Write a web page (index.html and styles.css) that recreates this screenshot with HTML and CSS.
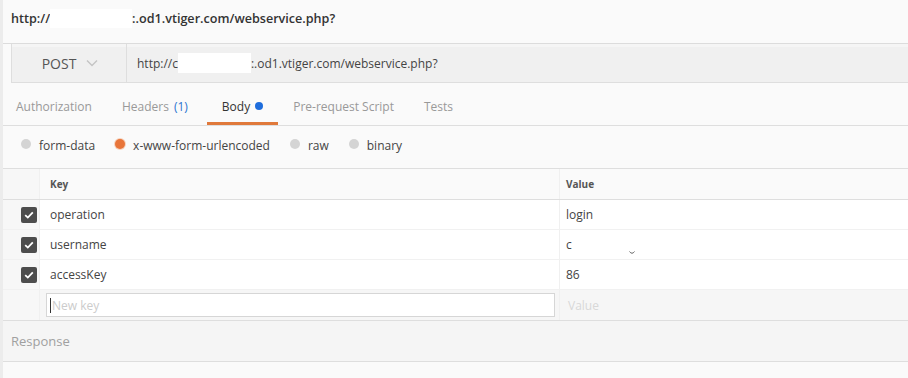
FILE: index.html
```html
<!DOCTYPE html>
<html lang="en">
<head>
  <meta charset="UTF-8" />
  <title>Request</title>
  <link rel="stylesheet" href="styles.css">
</head>
<body>
  <div class="title">http://<span class="redact title-redact"></span>:.od1.vtiger.com/webservice.php?</div>

  <div class="request-bar">
    <div class="method">POST
      <svg class="chevron" width="12" height="8" viewBox="0 0 12 8"><path d="M1 1.5 L6 6.5 L11 1.5" fill="none" stroke="#c4c4c4" stroke-width="1.4"/></svg>
    </div>
    <div class="url">http://c<span class="redact url-redact"></span>:.od1.vtiger.com/webservice.php?</div>
  </div>

  <div class="tabs">
    <div class="tab">Authorization</div>
    <div class="tab">Headers <span class="count">(1)</span></div>
    <div class="tab active">Body <span class="dot"></span></div>
    <div class="tab">Pre-request Script</div>
    <div class="tab">Tests</div>
  </div>

  <div class="body-types">
    <label class="radio"><span class="circle"></span>form-data</label>
    <label class="radio"><span class="circle on"></span>x-www-form-urlencoded</label>
    <label class="radio"><span class="circle"></span>raw</label>
    <label class="radio"><span class="circle"></span>binary</label>
  </div>

  <div class="params">
    <div class="row head">
      <div class="cell check"></div>
      <div class="cell key">Key</div>
      <div class="cell value">Value</div>
    </div>
    <div class="row">
      <div class="cell check"><span class="box"><svg width="10" height="8" viewBox="0 0 10 8"><path d="M1.2 4.2 L3.8 6.6 L8.8 1.4" fill="none" stroke="white" stroke-width="1.8"/></svg></span></div>
      <div class="cell key">operation</div>
      <div class="cell value">login</div>
    </div>
    <div class="row">
      <div class="cell check"><span class="box"><svg width="10" height="8" viewBox="0 0 10 8"><path d="M1.2 4.2 L3.8 6.6 L8.8 1.4" fill="none" stroke="white" stroke-width="1.8"/></svg></span></div>
      <div class="cell key">username</div>
      <div class="cell value">c<span class="mark"><svg width="6" height="4" viewBox="0 0 6 4"><path d="M0.5 0.5 Q3 4 5.5 0.5" fill="none" stroke="#666" stroke-width="1"/></svg></span></div>
    </div>
    <div class="row">
      <div class="cell check"><span class="box"><svg width="10" height="8" viewBox="0 0 10 8"><path d="M1.2 4.2 L3.8 6.6 L8.8 1.4" fill="none" stroke="white" stroke-width="1.8"/></svg></span></div>
      <div class="cell key">accessKey</div>
      <div class="cell value">86</div>
    </div>
    <div class="row new">
      <div class="cell check"></div>
      <div class="cell key"><div class="new-input"><span class="caret"></span>New key</div></div>
      <div class="cell value placeholder">Value</div>
    </div>
  </div>

  <div class="response">Response</div>
</body>
</html>
```
FILE: styles.css
```css
body {
  margin: 0;
  background: #fafafa;
  font-family: "Open Sans", "DejaVu Sans", sans-serif;
  color: #333;
  border-left: 3px solid #ececec;
  height: 378px;
  box-sizing: border-box;
  overflow: hidden;
}

.redact {
  display: inline-block;
  background: white;
  vertical-align: middle;
}

.title {
  height: 43px;
  line-height: 38px;
  padding-left: 8px;
  font-size: 12.6px;
  font-weight: 600;
  color: #333;
  border-bottom: 1px solid #dcdcdc;
}

.title-redact {
  width: 82px;
  height: 19px;
  margin-top: -3px;
}

.request-bar {
  display: flex;
  height: 38px;
  margin-left: 8px;
  background: #f0f0f0;
  border: 1px solid #dedede;
  border-right: none;
  border-top: none;
  box-shadow: inset 0 3px 0 #f5f5f5;
}

.method {
  width: 115px;
  display: flex;
  align-items: center;
  justify-content: center;
  gap: 10px;
  border-right: 1px solid #dedede;
  font-size: 14px;
  color: #555;
  padding-left: 2px;
  box-sizing: border-box;
}

.url {
  display: flex;
  align-items: center;
  padding-left: 10px;
  font-size: 12px;
  color: #444;
}

.url-redact {
  width: 73px;
  height: 20px;
}

.tabs {
  display: flex;
  height: 42px;
  border-bottom: 1px solid #dedede;
  margin-left: -2px;
}

.tab {
  display: flex;
  align-items: center;
  padding: 7px 15px 0;
  font-size: 12px;
  color: #999;
  border-bottom: 3px solid transparent;
}

.tab.active {
  color: #333;
  border-bottom-color: #e0793b;
  margin-left: 4px;
}

.count {
  color: #2b74d0;
  margin-left: 5px;
}

.dot {
  display: inline-block;
  width: 8px;
  height: 8px;
  border-radius: 50%;
  background: #1e6ddc;
  margin-left: 5px;
}

.body-types {
  display: flex;
  align-items: center;
  height: 42px;
  padding-left: 18px;
  padding-bottom: 4px;
  box-sizing: border-box;
  gap: 20px;
}

.radio {
  display: flex;
  align-items: center;
  font-size: 12px;
  color: #444;
}

.circle {
  width: 10px;
  height: 10px;
  border-radius: 50%;
  background: #d4d4d4;
  margin-right: 8px;
  margin-top: -3px;
}

.circle.on {
  background: #e8753a;
  box-shadow: 0 0 0 1px #f6d2bd;
}

.params {
  border-top: 1px solid #dedede;
}

.row {
  display: grid;
  grid-template-columns: 37px 519px 1fr;
  height: 30px;
  border-bottom: 1px solid #f1f1f1;
  box-sizing: border-box;
  background: white;
}

.row.head {
  border-bottom: 1px solid #dedede;
  height: 31px;
  background: #fafafa;
}

.cell {
  display: flex;
  align-items: center;
  font-size: 12px;
  color: #444;
}

.cell.check {
  justify-content: flex-end;
  padding-right: 2px;
  background: #f7f7f7;
  border-right: 1px solid #f0f0f0;
}

.cell.key {
  padding-left: 10px;
}

.cell.value {
  padding-left: 6px;
  border-left: 1px solid #f0f0f0;
}

.head .cell {
  font-size: 10px;
  font-weight: bold;
  color: #555;
}

.box {
  width: 16px;
  height: 16px;
  border-radius: 2px;
  background: #4d4d4d;
  display: flex;
  align-items: center;
  justify-content: center;
}

.mark {
  align-self: flex-end;
  margin-bottom: 4px;
  margin-left: 57px;
  display: flex;
}

.row.new {
  background: #f6f6f6;
  border-bottom: 1px solid #dedede;
  height: 31px;
}

.row.new .cell.key {
  padding-left: 6px;
  padding-right: 4px;
}

.new-input {
  flex: 1;
  height: 24px;
  background: white;
  border: 1px solid #d6d6d6;
  box-sizing: border-box;
  display: flex;
  align-items: center;
  padding-left: 3px;
  font-size: 12px;
  color: #ccc;
}

.caret {
  width: 1px;
  height: 15px;
  background: #333;
  margin-right: 1px;
}

.placeholder {
  color: #d8d8d8 !important;
  padding-left: 8px !important;
}

.response {
  height: 40px;
  display: flex;
  align-items: center;
  padding-left: 8px;
  font-size: 13px;
  color: #a0a0a0;
  background: #f5f5f5;
  border-bottom: 1px solid #dedede;
}
```
